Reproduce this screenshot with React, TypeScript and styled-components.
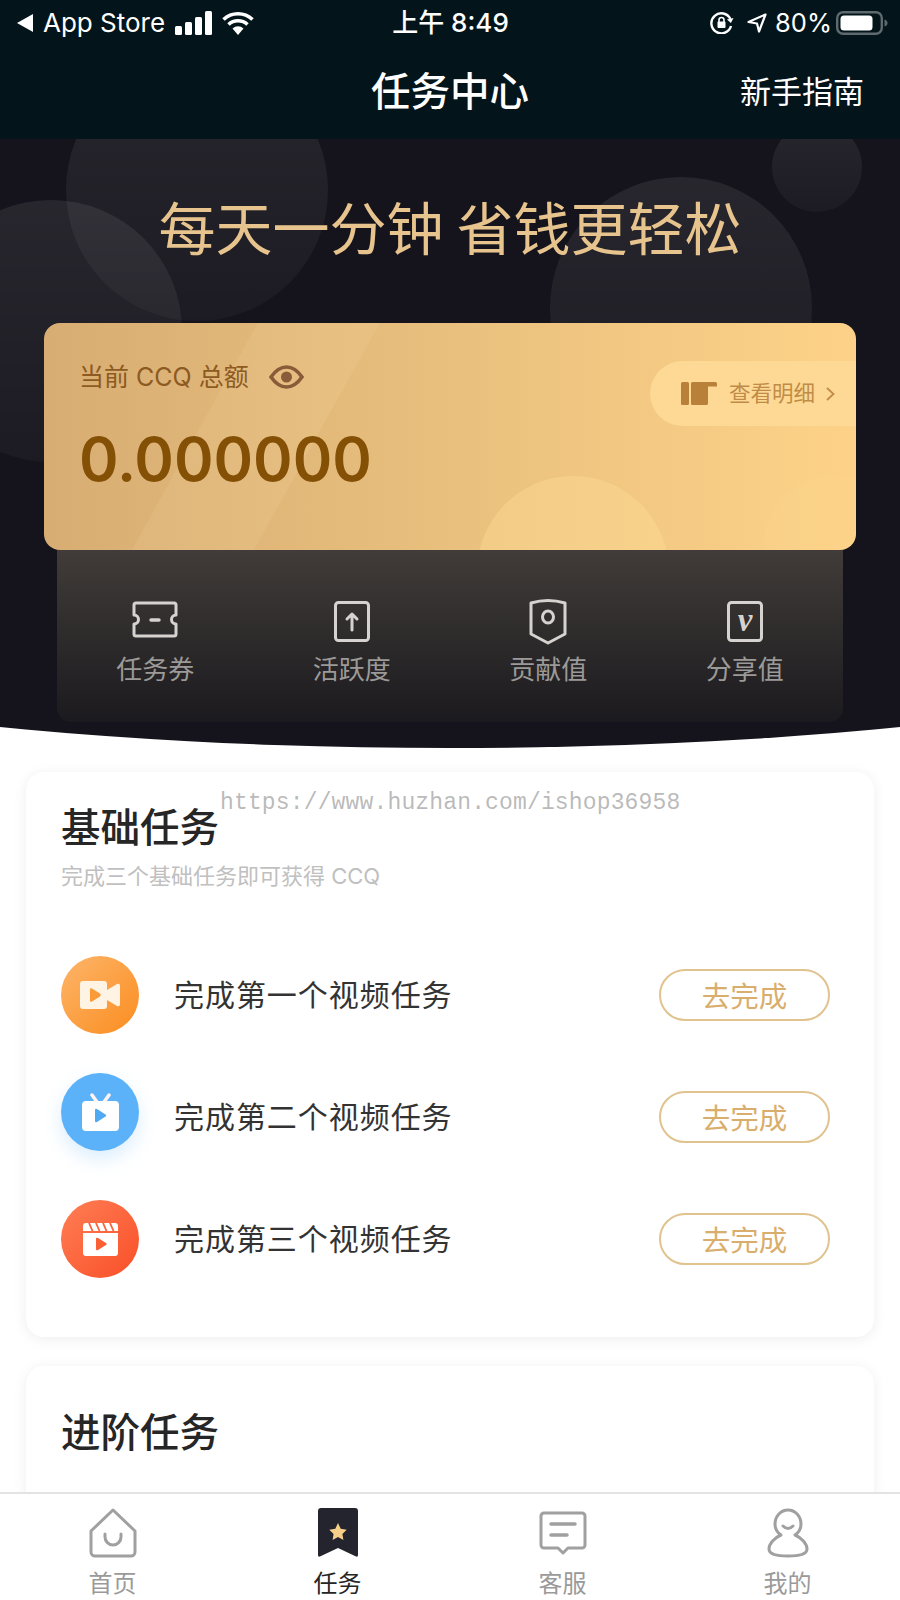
import styled, { createGlobalStyle } from "styled-components";

const CJK = `"Noto Sans CJK SC", "Noto Sans", sans-serif`;

const GlobalStyle = createGlobalStyle`
  html, body {
    margin: 0;
    padding: 0;
    background: #fff;
  }
  * {
    box-sizing: border-box;
  }
`;

const Page = styled.div`
  position: relative;
  display: flex;
  flex-direction: column;
  width: 900px;
  height: 1600px;
  overflow: hidden;
  font-family: ${CJK};
  background: #fff;
`;

const Header = styled.header`
  position: relative;
  z-index: 2;
  background: #03141a;
  color: #fff;
`;

const StatusBar = styled.div`
  display: grid;
  grid-template-columns: 1fr auto 1fr;
  align-items: center;
  height: 46px;
  padding: 0 12px 0 17px;
  font-family: Inter, ${CJK};
  font-size: 26px;
`;

const StatusLeft = styled.div`
  display: flex;
  align-items: center;
`;

const StatusRight = styled.div`
  display: flex;
  align-items: center;
  justify-content: flex-end;
`;

const StatusText = styled.span<{ $left?: number; $right?: number; $size?: number }>`
  margin-left: ${(p) => p.$left ?? 0}px;
  margin-right: ${(p) => p.$right ?? 0}px;
  font-size: ${(p) => p.$size ?? 26}px;
  line-height: 30px;
  white-space: nowrap;
`;

const Clock = styled.span`
  margin-right: 4px;
  font-size: 26px;
  font-weight: 500;
  line-height: 30px;
`;

const StatusIcon = styled.svg<{ $left?: number }>`
  display: block;
  flex: none;
  margin-left: ${(p) => p.$left ?? 0}px;
`;

const NavBar = styled.div`
  display: grid;
  grid-template-columns: 1fr auto 1fr;
  align-items: center;
  height: 93px;
  padding: 0 36px 6px;
`;

const NavTitle = styled.h1`
  grid-column: 2;
  margin: 0 0 2px;
  font-size: 39.5px;
  font-weight: 500;
  line-height: 50px;
`;

const NavLink = styled.span`
  justify-self: end;
  font-size: 31px;
  line-height: 40px;
`;

const Hero = styled.section`
  position: relative;
  flex: none;
  height: 609px;
  padding: 56px 44px 0;
  overflow: hidden;
  background: linear-gradient(#15141c, #15141c) no-repeat top / 100% calc(100% - 21px);

  /* curved bottom edge */
  &::before {
    content: "";
    position: absolute;
    left: -450px;
    bottom: 0;
    width: 1800px;
    height: 314px;
    border-radius: 50%;
    background: #15141c;
  }
`;

const Bubble = styled.div<{ $x: number; $y: number; $r: number }>`
  position: absolute;
  left: ${(p) => p.$x - p.$r}px;
  top: ${(p) => p.$y - p.$r}px;
  width: ${(p) => p.$r * 2}px;
  height: ${(p) => p.$r * 2}px;
  border-radius: 50%;
  background: linear-gradient(rgba(255, 255, 255, 0.08), rgba(255, 255, 255, 0.03));
`;

const Slogan = styled.h2`
  position: relative;
  margin: 0;
  font-size: 57px;
  font-weight: 400;
  line-height: 60px;
  text-align: center;
  white-space: nowrap;
  color: #e7c48d;
`;

const BalanceCard = styled.div`
  position: relative;
  height: 227px;
  margin-top: 68px;
  padding: 40px 35px 0;
  border-radius: 16px;
  overflow: hidden;
  background: linear-gradient(90deg, #d8ad73 0%, #e4ba7b 35%, #efc581 65%, #fdd288 100%);
`;

const CardBand = styled.div`
  position: absolute;
  top: -10px;
  left: 150px;
  width: 122px;
  height: 250px;
  transform: skewX(-29deg);
  background: rgba(255, 235, 190, 0.1);
`;

const CardCircle = styled.div<{ $x: number; $r: number; $o: number }>`
  position: absolute;
  left: ${(p) => p.$x - p.$r}px;
  top: 153px;
  width: ${(p) => p.$r * 2}px;
  height: ${(p) => p.$r * 2}px;
  border-radius: 50%;
  background: rgba(255, 222, 150, ${(p) => p.$o});
`;

const BalanceLabel = styled.div`
  position: relative;
  display: flex;
  align-items: center;
  height: 28px;
  font-family: Inter, ${CJK};
  font-size: 25px;
  line-height: 28px;
  color: #8d5a22;
`;

const EyeIcon = styled.svg`
  display: block;
  margin-left: 20px;
`;

const Amount = styled.div`
  position: relative;
  margin-top: 33px;
  font-family: Inter, sans-serif;
  font-size: 60px;
  font-weight: 600;
  line-height: 70px;
  color: #845005;
`;

const DetailPill = styled.div`
  position: absolute;
  top: 38px;
  right: 0;
  display: flex;
  align-items: center;
  width: 206px;
  height: 65px;
  padding-left: 31px;
  border-radius: 33px 0 0 33px;
  background: #fdd995;
  color: #c08c47;
`;

const DetailText = styled.span`
  margin: 0 0 3px 12px;
  font-size: 21.5px;
  line-height: 28px;
  white-space: nowrap;
`;

const Chevron = styled.svg`
  display: block;
  margin-left: 11px;
`;

const StatPanel = styled.div`
  position: relative;
  display: grid;
  grid-template-columns: repeat(4, 1fr);
  height: 172px;
  margin: 0 13px;
  padding-top: 52px;
  border-radius: 0 0 14px 14px;
  background: linear-gradient(#413c39, #1b1a1e);
`;

const Stat = styled.div`
  display: flex;
  flex-direction: column;
  align-items: center;
`;

const StatIcon = styled.svg`
  display: block;
  overflow: visible;
`;

const StatLabel = styled.span`
  margin-top: 12px;
  font-size: 26px;
  line-height: 28px;
  color: #9c9a98;
`;

const Content = styled.main`
  flex: 1;
  min-height: 0;
  padding: 24px 26px 0;
  overflow: hidden;
`;

const TaskCard = styled.section<{ $top: number }>`
  margin-bottom: 29px;
  padding: ${(p) => p.$top}px 44px 59px 35px;
  border-radius: 18px;
  background: #fff;
  box-shadow: 0 2px 14px rgba(0, 0, 0, 0.07);
`;

const CardTitle = styled.h3`
  margin: 0;
  font-size: 39.5px;
  font-weight: 500;
  line-height: 40px;
  color: #262626;
`;

const CardHint = styled.p`
  margin: 19px 0 0;
  font-family: Inter, ${CJK};
  font-size: 22px;
  line-height: 24px;
  color: #c0c0c0;
`;

const TaskList = styled.div`
  display: flex;
  flex-direction: column;
  gap: 44px;
  margin-top: 68px;
`;

const TaskRow = styled.div`
  display: flex;
  align-items: center;
  height: 78px;
`;

const TaskBadge = styled.div<{ $bg: string; $glow?: string; $lift?: number }>`
  display: flex;
  flex: none;
  align-items: center;
  justify-content: center;
  width: 78px;
  height: 78px;
  margin-bottom: ${(p) => (p.$lift ?? 0) * 2}px;
  border-radius: 50%;
  background: ${(p) => p.$bg};
  box-shadow: ${(p) => p.$glow ?? "none"};
`;

const TaskName = styled.span`
  flex: 1;
  margin: 0 0 4px 35px;
  font-size: 30px;
  letter-spacing: 0.95px;
  line-height: 40px;
  color: #333;
`;

const GoButton = styled.button`
  flex: none;
  width: 171px;
  height: 52px;
  padding: 0;
  border: 2px solid #e0c38f;
  border-radius: 26px;
  background: #fff;
  font-family: inherit;
  font-size: 28.5px;
  line-height: 1;
  color: #d9ae6c;
`;

const TabBar = styled.nav`
  position: relative;
  flex: none;
  display: grid;
  grid-template-columns: repeat(4, 1fr);
  height: 108px;
  padding-top: 14px;
  border-top: 2px solid #e3e3e3;
  background: #fff;
`;

const Tab = styled.div`
  display: flex;
  flex-direction: column;
  align-items: center;
`;

const TabIcon = styled.svg`
  display: block;
`;

const TabLabel = styled.span<{ $active?: boolean }>`
  margin-top: 11px;
  font-size: 24px;
  line-height: 26px;
  color: ${(p) => (p.$active ? "#262626" : "#9a9a9a")};
`;

const Watermark = styled.div`
  position: absolute;
  top: 789px;
  left: 220px;
  z-index: 3;
  font-family: "Liberation Mono", monospace;
  font-size: 23px;
  letter-spacing: 0.15px;
  line-height: 28px;
  white-space: nowrap;
  color: rgba(140, 140, 140, 0.6);
  pointer-events: none;
`;

const stats = [
  {
    label: "任务券",
    icon: (
      <>
        <path d="M2 1h38a2 2 0 0 1 2 2v10a4.500 4.500 0 0 0 0 9v10a2 2 0 0 1-2 2H2a2 2 0 0 1-2-2V22a4.500 4.500 0 0 0 0-9V3a2 2 0 0 1 2-2z" />
        <path d="M17 18h8" strokeWidth="3.5" />
      </>
    ),
  },
  {
    label: "活跃度",
    icon: (
      <>
        <rect x="4.500" y="0.500" width="33" height="38" rx="3" />
        <path d="M21 28V12M16 17l5-5 5 5" />
      </>
    ),
  },
  {
    label: "贡献值",
    icon: (
      <>
        <path d="M4 1q17-5 34 0v31l-17 9-17-9z" />
        <ellipse cx="21" cy="15" rx="5.500" ry="6" />
      </>
    ),
  },
  {
    label: "分享值",
    icon: <rect x="4.500" y="0.500" width="33" height="38" rx="3" />,
    letter: "v",
  },
];

const tasks = [
  {
    name: "完成第一个视频任务",
    bg: "linear-gradient(135deg, #fdb56a, #fb8d20)",
    icon: (
      <svg width="40" height="28" viewBox="0 0 40 28">
        <path fill="#fff3e4" d="M3 0h21a3 3 0 0 1 3 3v6l10-6q3-1 3 2v18q0 3-3 2l-10-6v6a3 3 0 0 1-3 3H3a3 3 0 0 1-3-3V3a3 3 0 0 1 3-3z" />
        <path fill="#fb9a38" d="M10 8.500q0-2 2-1l8 5q1.500 1.500 0 3l-8 5q-2 1-2-1z" />
      </svg>
    ),
  },
  {
    name: "完成第二个视频任务",
    bg: "#5bb2f8",
    glow: "0 8px 18px rgba(91, 178, 248, 0.22)",
    lift: 5,
    icon: (
      <svg width="37" height="38" viewBox="0 0 37 38">
        <path stroke="#fff3f3" strokeWidth="3.500" strokeLinecap="round" d="M10 2l5 7M27 2l-5 7" />
        <rect fill="#fff" y="8" width="37" height="30" rx="4" />
        <path fill="#4fa9f3" d="M13 17q0-2 2-1l8.500 5.500q1.500 1 0 2L15 29q-2 1-2-1z" />
      </svg>
    ),
  },
  {
    name: "完成第三个视频任务",
    bg: "linear-gradient(135deg, #ff7e55, #f94f28)",
    icon: (
      <svg width="35" height="33" viewBox="0 0 35 33">
        <path fill="#fff" d="M0 10h35v20a3 3 0 0 1-3 3H3a3 3 0 0 1-3-3z" />
        <path fill="#fff" d="M3 0h29a3 3 0 0 1 3 3v5H0V3a3 3 0 0 1 3-3z" />
        <path stroke="#fb6238" strokeWidth="1.800" d="M6 0l3.500 8M13 0l3.500 8M20 0l3.500 8M27 0l3.500 8" />
        <path fill="#fb5f36" d="M13 16q0-2 2-1l8 5q1.500 1 0 2l-8 5q-2 1-2-1z" />
      </svg>
    ),
  },
];

const App = () => {
  return (
    <Page>
      <GlobalStyle />
      <Header>
        <StatusBar>
          <StatusLeft>
            <StatusIcon width="16" height="18" viewBox="0 0 16 18">
              <path fill="#fff" d="M16 0v18L0 9z" />
            </StatusIcon>
            <StatusText $left={10}>App Store</StatusText>
            <StatusIcon width="37" height="24" viewBox="0 0 37 24" $left={10}>
              <g fill="#fff">
                <rect x="0" y="15" width="7" height="9" rx="1.500" />
                <rect x="10" y="11" width="7" height="13" rx="1.500" />
                <rect x="20" y="6" width="7" height="18" rx="1.500" />
                <rect x="30" y="0" width="7" height="24" rx="1.500" />
              </g>
            </StatusIcon>
            <StatusIcon width="32" height="24" viewBox="0 0 32 24" $left={10}>
              <path fill="none" stroke="#fff" strokeWidth="3.600" d="M1.500 8.500a21 21 0 0 1 29 0M6.500 13.500a14 14 0 0 1 19 0" />
              <path fill="#fff" d="M10.500 17.500a8 8 0 0 1 11 0L16 24z" />
            </StatusIcon>
          </StatusLeft>
          <Clock>上午 8:49</Clock>
          <StatusRight>
            <StatusIcon width="24" height="22" viewBox="0 0 24 22">
              <path fill="none" stroke="#fff" strokeWidth="2.400" d="M21 14a10 10 0 1 1-.6-7" />
              <path fill="#fff" d="M23.500 6l-2.600 5-4-3.600z" />
              <rect fill="#fff" x="7.500" y="9.500" width="8" height="6.500" rx="1" />
              <path fill="none" stroke="#fff" strokeWidth="1.600" d="M9 10V8a2.500 2.500 0 0 1 5 0v2" />
            </StatusIcon>
            <StatusIcon width="20" height="20" viewBox="0 0 20 20" $left={13}>
              <path fill="none" stroke="#fff" strokeWidth="2.200" strokeLinejoin="round" d="M18.500 1.500L1.500 9l8.500 1.500L12 18.500z" />
            </StatusIcon>
            <StatusText $left={8} $right={4} $size={25.5}>80%</StatusText>
            <StatusIcon width="52" height="24" viewBox="0 0 52 24">
              <rect x="1.200" y="1.200" width="44.600" height="21.600" rx="6" fill="none" stroke="#5f6a6e" strokeWidth="2.400" />
              <rect x="4.500" y="4.500" width="32" height="15" rx="3.500" fill="#fff" />
              <path fill="#5f6a6e" d="M48.500 8.500q3 1 3 3.500t-3 3.500z" />
            </StatusIcon>
          </StatusRight>
        </StatusBar>
        <NavBar>
          <NavTitle>任务中心</NavTitle>
          <NavLink>新手指南</NavLink>
        </NavBar>
      </Header>

      <Hero>
        <Bubble $x={197} $y={51} $r={131} />
        <Bubble $x={51} $y={192} $r={131} />
        <Bubble $x={681} $y={169} $r={131} />
        <Bubble $x={817} $y={28} $r={45} />
        <Slogan>每天一分钟 省钱更轻松</Slogan>
        <BalanceCard>
          <CardBand />
          <CardCircle $x={529} $r={96} $o={0.4} />
          <CardCircle $x={790} $r={70} $o={0.15} />
          <BalanceLabel>
            当前 CCQ 总额
            <EyeIcon width="35" height="24" viewBox="0 0 35 24">
              <path fill="none" stroke="#8a5b39" strokeWidth="3.600" d="M2 12Q9 2 17.500 2T33 12q-7 10-15.500 10T2 12z" />
              <circle cx="17.500" cy="12" r="5.500" fill="#8a5b39" />
              <path fill="#e0b577" d="M18 8a4.500 4.500 0 0 1 2.500 6 5 5 0 0 0-2.500-6z" />
            </EyeIcon>
          </BalanceLabel>
          <Amount>0.000000</Amount>
          <DetailPill>
            <svg width="36" height="23" viewBox="0 0 36 23">
              <g fill="#b9803a">
                <rect x="0" y="0" width="8" height="23" rx="1.500" />
                <path d="M10 1.500A1.500 1.500 0 0 1 11.500 0H34.500A1.500 1.500 0 0 1 36 1.500V4.500H27V21.500A1.500 1.500 0 0 1 25.500 23H11.500A1.500 1.500 0 0 1 10 21.500z" />
              </g>
            </svg>
            <DetailText>查看明细</DetailText>
            <Chevron width="9" height="14" viewBox="0 0 9 14">
              <path fill="none" stroke="#c08c47" strokeWidth="1.800" d="M1 1l6.500 6L1 13" />
            </Chevron>
          </DetailPill>
        </BalanceCard>
        <StatPanel>
          {stats.map((stat) => (
            <Stat key={stat.label}>
              <StatIcon
                width="42"
                height="40"
                viewBox="0 0 42 40"
                fill="none"
                stroke="#d6d2cf"
                strokeWidth="3"
                strokeLinecap="round"
                strokeLinejoin="round"
              >
                {stat.icon}
                {stat.letter && (
                  <text
                    x="21"
                    y="29"
                    textAnchor="middle"
                    stroke="none"
                    fill="#d6d2cf"
                    fontFamily="Liberation Serif, serif"
                    fontStyle="italic"
                    fontWeight="bold"
                    fontSize="33"
                  >
                    {stat.letter}
                  </text>
                )}
              </StatIcon>
              <StatLabel>{stat.label}</StatLabel>
            </Stat>
          ))}
        </StatPanel>
      </Hero>

      <Content>
        <TaskCard $top={33}>
          <CardTitle>基础任务</CardTitle>
          <CardHint>完成三个基础任务即可获得 CCQ</CardHint>
          <TaskList>
            {tasks.map((task) => (
              <TaskRow key={task.name}>
                <TaskBadge $bg={task.bg} $glow={task.glow} $lift={task.lift}>
                  {task.icon}
                </TaskBadge>
                <TaskName>{task.name}</TaskName>
                <GoButton type="button">去完成</GoButton>
              </TaskRow>
            ))}
          </TaskList>
        </TaskCard>
        <TaskCard $top={44}>
          <CardTitle>进阶任务</CardTitle>
        </TaskCard>
      </Content>

      <TabBar>
        <Tab>
          <TabIcon width="50" height="50" viewBox="0 0 50 50" fill="none" stroke="#a0a0a0" strokeWidth="3" strokeLinejoin="round" strokeLinecap="round">
            <path d="M25 2l22 21v21a4 4 0 0 1-4 4H7a4 4 0 0 1-4-4V23z" />
            <path d="M17 26v3a8 8 0 0 0 16 0v-3" />
          </TabIcon>
          <TabLabel>首页</TabLabel>
        </Tab>
        <Tab>
          <TabIcon width="40" height="50" viewBox="0 0 40 50">
            <path fill="#23242d" d="M3 0h34a3 3 0 0 1 3 3v44q0 3-3 1L20 40 3 48q-3 2-3-1V3a3 3 0 0 1 3-3z" />
            <path fill="#f8cf88" d="M20 15l2.700 5.800 6 .9-4.300 4.200 1 6-5.400-2.900-5.400 2.900 1-6-4.300-4.200 6-.9z" />
          </TabIcon>
          <TabLabel $active>任务</TabLabel>
        </Tab>
        <Tab>
          <TabIcon width="48" height="50" viewBox="0 0 48 50" fill="none" stroke="#a0a0a0" strokeWidth="3" strokeLinejoin="round" strokeLinecap="round">
            <path d="M5 5h38a3 3 0 0 1 3 3v29a3 3 0 0 1-3 3H29l-5 5-5-5H5a3 3 0 0 1-3-3V8a3 3 0 0 1 3-3z" />
            <path d="M12 16h24M12 27h16" strokeWidth="3.500" />
          </TabIcon>
          <TabLabel>客服</TabLabel>
        </Tab>
        <Tab>
          <TabIcon width="42" height="50" viewBox="0 0 42 50" fill="none" stroke="#a0a0a0" strokeWidth="3" strokeLinejoin="round" strokeLinecap="round">
            <path d="M21 2c7 0 13 6 13 14 0 5-3 9-6 11 7 3 12 9 12 14 0 5-6 7-19 7S2 46 2 41c0-5 5-11 12-14-3-2-6-6-6-11C8 8 14 2 21 2z" />
            <path d="M16 18q5 5 10 0" />
          </TabIcon>
          <TabLabel>我的</TabLabel>
        </Tab>
      </TabBar>

      <Watermark>https://www.huzhan.com/ishop36958</Watermark>
    </Page>
  );
};

export default App;
